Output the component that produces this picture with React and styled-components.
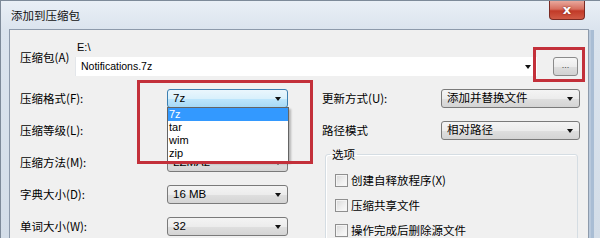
import styled, { createGlobalStyle } from 'styled-components'

const GlobalStyle = createGlobalStyle`
  html, body {
    margin: 0;
    padding: 0;
    background: #dfe7f0;
  }
  body {
    font-family: "Liberation Sans", "Noto Sans CJK SC", sans-serif;
    font-size: 11px;
    color: #000;
  }
`

const Window = styled.div`
  width: 600px;
  height: 238px;
  overflow: hidden;
  display: flex;
  flex-direction: column;
  box-sizing: border-box;
  border-left: 1px solid #7d8a99;
  border-top: 1px solid #7d8a99;
  background: linear-gradient(180deg, #e9eff6 0px, #dbe4ee 28px, #d3dde8 100%);
`

const TitleBar = styled.div`
  height: 28px;
  flex: none;
  display: flex;
  align-items: flex-start;
  justify-content: space-between;
  padding-left: 10px;
  padding-right: 15px;
`

const Title = styled.div`
  font-family: "Noto Sans CJK SC", sans-serif;
  font-size: 11.5px;
  line-height: 28px;
  color: #111;
`

const CloseButton = styled.div`
  width: 36px;
  height: 19px;
  box-sizing: border-box;
  border: 1px solid #7a2a23;
  border-top: none;
  border-radius: 0 0 4px 4px;
  background: linear-gradient(180deg, #e9a89c 0%, #d66e5e 45%, #c23a28 55%, #d05a45 100%);
  color: #fff;
  font-family: "DejaVu Sans", sans-serif;
  font-weight: bold;
  font-size: 13px;
  line-height: 17px;
  text-align: center;
  text-shadow: 0 0 2px #6a1a12;
`

const Client = styled.div`
  flex: 1;
  margin: 0 11px 0 8px;
  border: 1px solid #8d9aab;
  border-bottom: none;
  background: #f0f0f0;
  box-shadow: 3px 0 0 -1px #b9c9dc, 6px 0 0 -1px #a9bdd4;
`

const ArchiveRow = styled.div`
  display: flex;
  align-items: center;
  padding: 10px 0 0 10px;
`

const ArchiveLabel = styled.div`
  width: 55px;
  font-family: "Noto Sans CJK SC", sans-serif;
  font-size: 11.5px;
  margin-top: -2px;
`

const PathBlock = styled.div`
  width: 462px;
  display: flex;
  flex-direction: column;
`

const Folder = styled.div`
  height: 17px;
  line-height: 14px;
  padding-left: 2px;
`

const PathInput = styled.div`
  position: relative;
  height: 19px;
  box-sizing: border-box;
  background: #fff;
  border-left: 1px solid #e3e6ea;
  padding-left: 5px;
  line-height: 19px;
  font-size: 10.5px;
`

const Arrow = styled.span`
  position: absolute;
  right: ${p => p.$right || 6}px;
  top: 50%;
  margin-top: -2px;
  border-left: 3.5px solid transparent;
  border-right: 3.5px solid transparent;
  border-top: 4px solid #111;
`

const BrowseWrap = styled.div`
  position: relative;
  align-self: flex-end;
  margin-left: 16px;
`

const BrowseButton = styled.div`
  width: 25px;
  height: 19px;
  box-sizing: border-box;
  border: 1px solid #8a8a8a;
  border-radius: 3px;
  background: linear-gradient(180deg, #f6f6f6 0%, #ececec 50%, #dedede 51%, #d2d2d2 100%);
  text-align: center;
  font-size: 9px;
  line-height: 15px;
  color: #444;
`

const Highlight = styled.div`
  position: absolute;
  left: ${p => p.$left}px;
  top: ${p => p.$top}px;
  width: ${p => p.$width}px;
  height: ${p => p.$height}px;
  box-sizing: border-box;
  border: 3px solid #c3303a;
  z-index: 5;
  pointer-events: none;
`

const Columns = styled.div`
  display: flex;
  gap: 34px;
  margin-top: 13px;
  padding-left: 10px;
`

const FormGrid = styled.div`
  display: grid;
  grid-template-columns: ${p => p.$cols};
  grid-auto-rows: 19px;
  row-gap: 13px;
  align-items: center;
`

const Label = styled.div`
  font-family: "Noto Sans CJK SC", sans-serif;
  font-size: 11.5px;
  line-height: 19px;
  white-space: nowrap;
`

const Cell = styled.div`
  position: relative;
  height: 19px;
`

const Combo = styled.div`
  position: relative;
  height: 19px;
  box-sizing: border-box;
  border: 1px solid ${p => (p.$focused ? '#3c7fb1' : '#7a7a7a')};
  border-radius: 3px;
  padding-left: 5px;
  line-height: 17px;
  white-space: nowrap;
  overflow: hidden;
  background: ${p =>
    p.$focused
      ? 'linear-gradient(180deg, #eaf6fd 0%, #d9f0fc 50%, #bee6fd 51%, #a7d9f5 100%)'
      : 'linear-gradient(180deg, #f4f4f4 0%, #ececec 50%, #dfdfdf 51%, #d4d4d4 100%)'};
  font-family: "Liberation Sans", "Noto Sans CJK SC", sans-serif;
  font-size: 11.5px;
`

const DropList = styled.div`
  position: absolute;
  left: 0;
  top: 18px;
  width: 122px;
  box-sizing: border-box;
  border: 1px solid #646464;
  background: #fff;
  box-shadow: 2px 2px 2px rgba(0, 0, 0, 0.25);
  z-index: 3;
  padding-bottom: 1px;
`

const DropItem = styled.div`
  height: 13px;
  line-height: 13px;
  padding-left: 1px;
  font-size: 11px;
  background: ${p => (p.$active ? '#3399ff' : 'transparent')};
  color: ${p => (p.$active ? '#fff' : '#000')};
`

const RightCol = styled.div`
  display: flex;
  flex-direction: column;
`

const GroupBox = styled.fieldset`
  margin: 7px 0 0 3px;
  width: 253px;
  box-sizing: border-box;
  height: 120px;
  padding: 0 0 0 4px;
  border: 1px solid #d5dde3;
  border-radius: 3px;
  box-shadow: inset 1px 1px 0 #fff;
`

const Legend = styled.legend`
  padding: 0 2px;
  font-family: "Noto Sans CJK SC", sans-serif;
  font-size: 11.5px;
  line-height: 15px;
`

const CheckList = styled.div`
  display: flex;
  flex-direction: column;
  gap: 7px;
  padding: 9px 0 0 5px;
`

const CheckRow = styled.label`
  display: flex;
  align-items: center;
  gap: 3px;
  height: 18px;
  font-family: "Noto Sans CJK SC", sans-serif;
  font-size: 11.5px;
`

const CheckBox = styled.span`
  width: 13px;
  height: 13px;
  box-sizing: border-box;
  border: 1px solid #8f8f8f;
  background: linear-gradient(135deg, #d8d8d8 0%, #f0f0f0 60%, #fbfbfb 100%);
  box-shadow: inset 0 0 0 1px #f4f4f4;
`

const formats = ['7z', 'tar', 'wim', 'zip']

const App = () => {
  return (
    <>
      <GlobalStyle />
      <Window>
        <TitleBar>
          <Title>添加到压缩包</Title>
          <CloseButton>x</CloseButton>
        </TitleBar>
        <Client>
          <ArchiveRow>
            <ArchiveLabel>压缩包(A)</ArchiveLabel>
            <PathBlock>
              <Folder>E:\</Folder>
              <PathInput>
                Notifications.7z
                <Arrow $right={6} />
              </PathInput>
            </PathBlock>
            <BrowseWrap>
              <BrowseButton>...</BrowseButton>
              <Highlight $left={-20} $top={-10} $width={52} $height={35} />
            </BrowseWrap>
          </ArchiveRow>

          <Columns>
            <FormGrid $cols="147px 121px">
              <Label>压缩格式(F):</Label>
              <Cell>
                <Combo $focused>
                  7z
                  <Arrow />
                </Combo>
                <DropList>
                  {formats.map((f, i) => (
                    <DropItem key={f} $active={i === 0}>{f}</DropItem>
                  ))}
                </DropList>
                <Highlight $left={-30} $top={-9} $width={176} $height={84} />
              </Cell>

              <Label>压缩等级(L):</Label>
              <Cell>
                <Combo>
                  <Arrow />
                </Combo>
              </Cell>

              <Label>压缩方法(M):</Label>
              <Cell>
                <Combo>
                  LZMA2
                  <Arrow />
                </Combo>
              </Cell>

              <Label>字典大小(D):</Label>
              <Cell>
                <Combo>
                  16 MB
                  <Arrow />
                </Combo>
              </Cell>

              <Label>单词大小(W):</Label>
              <Cell>
                <Combo>
                  32
                  <Arrow />
                </Combo>
              </Cell>
            </FormGrid>

            <RightCol>
              <FormGrid $cols="119px 139px">
                <Label>更新方式(U):</Label>
                <Cell>
                  <Combo>
                    添加并替换文件
                    <Arrow />
                  </Combo>
                </Cell>
                <Label>路径模式</Label>
                <Cell>
                  <Combo>
                    相对路径
                    <Arrow />
                  </Combo>
                </Cell>
              </FormGrid>
              <GroupBox>
                <Legend>选项</Legend>
                <CheckList>
                  <CheckRow><CheckBox />创建自释放程序(X)</CheckRow>
                  <CheckRow><CheckBox />压缩共享文件</CheckRow>
                  <CheckRow><CheckBox />操作完成后删除源文件</CheckRow>
                </CheckList>
              </GroupBox>
            </RightCol>
          </Columns>
        </Client>
      </Window>
    </>
  )
}

export default App
